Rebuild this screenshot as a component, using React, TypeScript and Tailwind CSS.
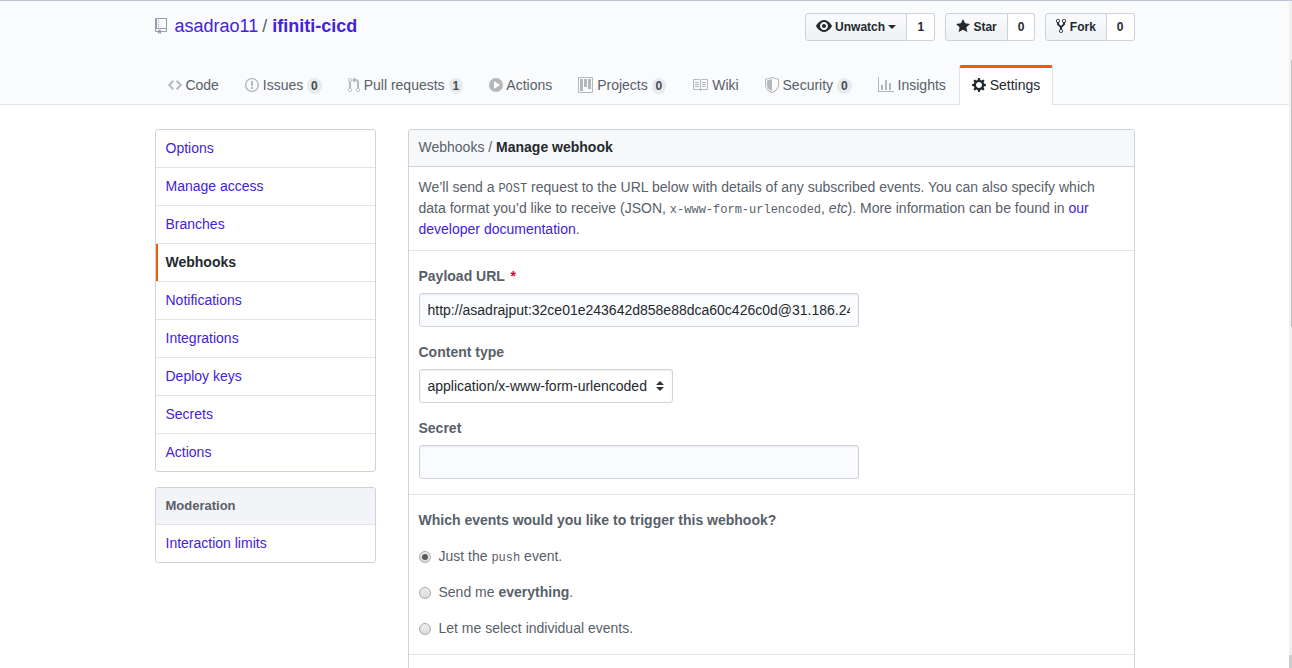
import type { ReactNode } from "react";

type IconProps = { d: string; w: number; className?: string };

function Octicon({ d, w, className = "" }: IconProps) {
  return (
    <svg
      width={w}
      height={16}
      viewBox={`0 0 ${w} 16`}
      fill="currentColor"
      aria-hidden="true"
      className={`inline-block shrink-0 align-text-top ${className}`}
    >
      <path fillRule="evenodd" d={d} />
    </svg>
  );
}

const icons = {
  repo: "M4 9H3V8h1v1zm0-3H3v1h1V6zm0-2H3v1h1V4zm0-2H3v1h1V2zm8-1v12c0 .55-.45 1-1 1H6v2l-1.5-1.5L3 16v-2H1c-.55 0-1-.45-1-1V1c0-.55.45-1 1-1h10c.55 0 1 .45 1 1zm-1 10H1v2h2v-1h3v1h5v-2zm0-10H2v9h9V1z",
  eye: "M8.06 2C3 2 0 8 0 8s3 6 8.06 6C13 14 16 8 16 8s-3-6-7.94-6zM8 12c-2.2 0-4-1.78-4-4 0-2.2 1.8-4 4-4 2.22 0 4 1.8 4 4 0 2.22-1.78 4-4 4zm2-4c0 1.11-.89 2-2 2-1.11 0-2-.89-2-2 0-1.11.89-2 2-2 1.11 0 2 .89 2 2z",
  star: "M14 6l-4.9-.64L7 1 4.9 5.36 0 6l3.6 3.26L2.67 14 7 11.67 11.33 14l-.93-4.74L14 6z",
  fork: "M8 1a1.993 1.993 0 0 0-1 3.72V6L5 8 3 6V4.72A1.993 1.993 0 0 0 2 1a1.993 1.993 0 0 0-1 3.72V6.5l3 3v1.78A1.993 1.993 0 0 0 5 15a1.993 1.993 0 0 0 1-3.72V9.5l3-3V4.72A1.993 1.993 0 0 0 8 1zM2 4.2C1.34 4.2.8 3.65.8 3c0-.65.55-1.2 1.2-1.2.65 0 1.2.55 1.2 1.2 0 .65-.55 1.2-1.2 1.2zm3 10c-.66 0-1.2-.55-1.2-1.2 0-.65.55-1.2 1.2-1.2.65 0 1.2.55 1.2 1.2 0 .65-.55 1.2-1.2 1.2zm3-10c-.66 0-1.2-.55-1.2-1.2 0-.65.55-1.2 1.2-1.2.65 0 1.2.55 1.2 1.2 0 .65-.55 1.2-1.2 1.2z",
  code: "M9.5 3L8 4.5 11.5 8 8 11.5 9.5 13 14 8 9.5 3zm-5 0L0 8l4.5 5L6 11.5 2.5 8 6 4.5 4.5 3z",
  issue: "M7 2.3c3.14 0 5.7 2.56 5.7 5.7s-2.56 5.7-5.7 5.7A5.71 5.71 0 0 1 1.3 8c0-3.14 2.56-5.7 5.7-5.7zM7 1C3.14 1 0 4.14 0 8s3.14 7 7 7 7-3.14 7-7-3.14-7-7-7zm1 3H6v5h2V4zm0 6H6v2h2v-2z",
  pull: "M11 11.28V5c-.03-.78-.34-1.47-.94-2.06C9.46 2.35 8.78 2.03 8 2H7V0L4 3l3 3V4h1c.27.02.48.11.69.31.21.2.3.42.31.69v6.28A1.993 1.993 0 0 0 10 15a1.993 1.993 0 0 0 1-3.72zm-1 2.92c-.66 0-1.2-.55-1.2-1.2 0-.65.55-1.2 1.2-1.2.65 0 1.2.55 1.2 1.2 0 .65-.55 1.2-1.2 1.2zM4 3c0-1.11-.89-2-2-2a1.993 1.993 0 0 0-1 3.72v6.56A1.993 1.993 0 0 0 2 15a1.993 1.993 0 0 0 1-3.72V4.72c.59-.34 1-.98 1-1.72zm-.8 10c0 .66-.55 1.2-1.2 1.2-.65 0-1.2-.55-1.2-1.2 0-.65.55-1.2 1.2-1.2.65 0 1.2.55 1.2 1.2zM2 4.2C1.34 4.2.8 3.65.8 3c0-.65.55-1.2 1.2-1.2.65 0 1.2.55 1.2 1.2 0 .65-.55 1.2-1.2 1.2z",
  play: "M14 8A7 7 0 1 1 0 8a7 7 0 0 1 14 0zm-8.223 3.482l4.599-3.066a.5.5 0 0 0 0-.832L5.777 4.518A.5.5 0 0 0 5 4.934v6.132a.5.5 0 0 0 .777.416z",
  project: "M10 12h3V2h-3v10zm-4-2h3V2H6v8zm-4 4h3V2H2v12zm-1 1h13V1H1v14zM14 0H1a1 1 0 0 0-1 1v14a1 1 0 0 0 1 1h13a1 1 0 0 0 1-1V1a1 1 0 0 0-1-1z",
  book: "M3 5h4v1H3V5zm0 3h4V7H3v1zm0 2h4V9H3v1zm11-5h-4v1h4V5zm0 2h-4v1h4V7zm0 2h-4v1h4V9zm2-6v9c0 .55-.45 1-1 1H9.5l-1 1-1-1H2c-.55 0-1-.45-1-1V3c0-.55.45-1 1-1h5.5l1 1 1-1H15c.55 0 1 .45 1 1zm-8 .5L7.5 3H2v9h6V3.5zm7-.5H9.5l-.5.5V12h6V3z",
  shield: "M0 2l7-2 7 2v6.02C14 12.69 8.69 16 7 16c-1.69 0-7-3.31-7-7.98V2zm1 .75L7 1l6 1.75v5.268C13 12.104 8.449 15 7 15c-1.449 0-6-2.896-6-6.982V2.75zm1 .75L7 2v12c-1.207 0-5-2.482-5-5.985V3.5z",
  graph: "M16 14v1H0V0h1v14h15zM5 13H3V8h2v5zm4 0H7V3h2v10zm4 0h-2V6h2v7z",
  gear: "M14 8.77v-1.6l-1.94-.64-.45-1.09.88-1.84-1.13-1.13-1.81.91-1.09-.45-.69-1.92h-1.6l-.63 1.94-1.11.45-1.84-.88-1.13 1.13.91 1.81-.45 1.09L0 7.23v1.59l1.94.64.45 1.09-.88 1.84 1.13 1.13 1.81-.91 1.09.45.69 1.92h1.59l.63-1.94 1.11-.45 1.84.88 1.13-1.13-.92-1.81.47-1.09L14 8.75v.02zM7 11c-1.66 0-3-1.34-3-3s1.34-3 3-3 3 1.34 3 3-1.34 3-3 3z",
};

const tabs = [
  { label: "Code", d: icons.code, w: 14 },
  { label: "Issues", d: icons.issue, w: 14, count: 0 },
  { label: "Pull requests", d: icons.pull, w: 12, count: 1 },
  { label: "Actions", d: icons.play, w: 14 },
  { label: "Projects", d: icons.project, w: 15, count: 0 },
  { label: "Wiki", d: icons.book, w: 16 },
  { label: "Security", d: icons.shield, w: 14, count: 0 },
  { label: "Insights", d: icons.graph, w: 16 },
  { label: "Settings", d: icons.gear, w: 14, active: true },
];

const menu = [
  "Options",
  "Manage access",
  "Branches",
  "Webhooks",
  "Notifications",
  "Integrations",
  "Deploy keys",
  "Secrets",
  "Actions",
];

function SocialButton({ children, count }: { children: ReactNode; count: number }) {
  return (
    <li className="flex text-xs leading-5 font-bold text-[#24292e]">
      <button className="h-7 rounded-l-[3px] border border-[#cdd0d5] bg-linear-to-b from-[#fafbfc] to-[#eff3f6] to-90% px-2.5 py-[3px] whitespace-nowrap">
        {children}
      </button>
      <a className="h-7 rounded-r-[3px] border border-l-0 border-[#d1d3d8] bg-white px-2.5 py-[3px]">{count}</a>
    </li>
  );
}

function Code({ children }: { children: ReactNode }) {
  return <code className="font-['Liberation_Mono',monospace] text-xs">{children}</code>;
}

function Radio({ checked, children }: { checked?: boolean; children: ReactNode }) {
  return (
    <label className="mt-[15px] flex h-[21px] items-center">
      <span className="mt-px mr-2 flex size-3 items-center justify-center rounded-full border border-[#a8a8a8] bg-linear-to-b from-[#ededed] to-[#dcdcdc]">
        {checked && <span className="size-1.5 rounded-full bg-[#5a5a5a]" />}
      </span>
      <span>{children}</span>
    </label>
  );
}

function Header() {
  return (
    <header className="h-[105px] border-t border-b border-t-[#c0c4d2] border-b-[#e1e4e8] bg-[#fafbfd]">
      <div className="mx-auto flex h-[104px] w-[980px] flex-col justify-between">
        <div className="flex justify-between pt-3">
          <h1 className="flex h-[27px] items-center text-lg leading-[27px]">
            <Octicon d={icons.repo} w={12} className="mr-2 mb-0.5 text-[#959da9]" />
            <a className="text-[#4322d9]">asadrao11</a>
            <span className="mr-[5px] ml-1">/</span>
            <a className="font-bold text-[#4322d9]">ifiniti-cicd</a>
          </h1>
          <ul className="flex gap-2.5">
            <SocialButton count={1}>
              <Octicon d={icons.eye} w={16} className="-mt-0.5 mb-0.5" /> Unwatch{" "}
              <span className="mb-0.5 inline-block border-x-4 border-t-4 border-x-transparent border-t-current align-middle" />
            </SocialButton>
            <SocialButton count={0}>
              <Octicon d={icons.star} w={14} className="-mt-0.5 mb-0.5" /> Star
            </SocialButton>
            <SocialButton count={0}>
              <Octicon d={icons.fork} w={10} className="-mt-0.5 mb-0.5" /> Fork
            </SocialButton>
          </ul>
        </div>
        <nav className="flex">
          {tabs.map((t) => (
            <a
              key={t.label}
              className={
                t.active
                  ? "h-10 rounded-t-[3px] border-x border-t-[3px] border-x-[#e1e4e8] border-t-[#f05a00] bg-white px-3 pt-[7px] leading-[21px] whitespace-nowrap text-[#24292e]"
                  : "h-10 border-x border-t-[3px] border-transparent px-3 pt-[7px] leading-[21px] whitespace-nowrap"
              }
            >
              <Octicon d={t.d} w={t.w} className={t.active ? "" : "text-[#b5b7bb]"} /> {t.label}
              {t.count !== undefined && (
                <>
                  {" "}
                  <span className="inline-block rounded-[20px] bg-[#e8eaed] px-1 py-0.5 text-xs leading-3 font-bold text-[#444d56]">
                    {t.count}
                  </span>
                </>
              )}
            </a>
          ))}
        </nav>
      </div>
    </header>
  );
}

function Sidebar() {
  return (
    <aside className="w-[221px]">
      <nav className="rounded-[3px] border border-[#cfd2dc]">
        {menu.map((m) => (
          <a
            key={m}
            className={
              m === "Webhooks"
                ? "block border-b border-[#e1e4e8] px-2.5 py-2 font-bold text-[#24292e] shadow-[inset_2px_0_0_#f05a00]"
                : "block border-b border-[#e1e4e8] px-2.5 py-2 text-[#4322d9] last:border-b-0"
            }
          >
            {m}
          </a>
        ))}
      </nav>
      <nav className="mt-[15px] rounded-[3px] border border-[#cfd2dc]">
        <h3 className="rounded-t-[2px] border-b border-[#e1e4e8] bg-[#f3f4f8] px-2.5 py-2 text-[13px] leading-[19.5px] font-bold">
          Moderation
        </h3>
        <a className="block px-2.5 py-2 text-[#4322d9]">Interaction limits</a>
      </nav>
    </aside>
  );
}

function WebhookForm() {
  return (
    <main className="h-[600px] w-[727px] rounded-t-[3px] border border-[#cfd2dc]">
      <h2 className="rounded-t-[2px] border-b border-[#cfd2dc] bg-[#f6f8fa] px-2.5 pt-[7px] pb-2">
        Webhooks / <strong className="text-[#24292e]">Manage webhook</strong>
      </h2>
      <p className="border-b border-[#e1e4e8] p-2.5">
        We’ll send a <Code>POST</Code> request to the URL below with details of any subscribed events. You can also
        specify which data format you’d like to receive (JSON, <Code>x-www-form-urlencoded</Code>, <em>etc</em>). More
        information can be found in <a className="text-[#4322d9]">our developer documentation</a>.
      </p>
      <section className="border-b border-[#e1e4e8] px-2.5 py-[15px]">
        <div className="font-bold">
          Payload URL <span className="ml-0.5 text-[#d3062b]">*</span>
        </div>
        <div className="mt-1.5 h-[34px] w-[440px] rounded-[3px] border border-[#cfd2dc] bg-[#fafbfd] px-2 py-1.5 leading-5 text-[#24292e] shadow-[inset_0_1px_2px_rgba(27,31,35,0.075)]">
          <div className="overflow-hidden whitespace-nowrap">
            http://asadrajput:32ce01e243642d858e88dca60c426c0d@31.186.24
          </div>
        </div>
        <div className="mt-[15px] font-bold">Content type</div>
        <div className="mt-1.5 flex h-[34px] w-[254px] items-center justify-between rounded-[3px] border border-[#cfd2dc] bg-white px-2 text-[#24292e] shadow-[inset_0_1px_2px_rgba(27,31,35,0.075)]">
          <span>application/x-www-form-urlencoded</span>
          <svg width="8" height="10" viewBox="0 0 8 10" fill="#333" aria-hidden="true">
            <path d="M4 0l4 4H0zM4 10L0 6h8z" />
          </svg>
        </div>
        <div className="mt-[15px] font-bold">Secret</div>
        <div className="mt-1.5 h-[34px] w-[440px] rounded-[3px] border border-[#cfd2dc] bg-[#fafbfd] shadow-[inset_0_1px_2px_rgba(27,31,35,0.075)]" />
      </section>
      <section className="border-b border-[#e1e4e8] px-2.5 py-[15px]">
        <h3 className="font-bold">Which events would you like to trigger this webhook?</h3>
        <Radio checked>
          Just the <Code>push</Code> event.
        </Radio>
        <Radio>
          Send me <strong>everything</strong>.
        </Radio>
        <Radio>Let me select individual events.</Radio>
      </section>
    </main>
  );
}

export default function App() {
  return (
    <div className="flex h-[668px] w-[1292px] overflow-hidden bg-white font-['Liberation_Sans',Arial,sans-serif] text-sm leading-[21px] text-[#586069]">
      <div className="h-[668px] w-[1289px]">
        <Header />
        <div className="mx-auto flex w-[980px] justify-between pt-6">
          <Sidebar />
          <WebhookForm />
        </div>
      </div>
      <div className="flex w-[3px] flex-col items-end justify-between border-t border-[#c0c4d2] bg-[#f1f1f1] pt-[59px]">
        <div className="h-[267px] w-px bg-[#c1c1c1]" />
        <div className="h-[13px] w-[3px] bg-[#cdcdcd]" />
      </div>
    </div>
  );
}
